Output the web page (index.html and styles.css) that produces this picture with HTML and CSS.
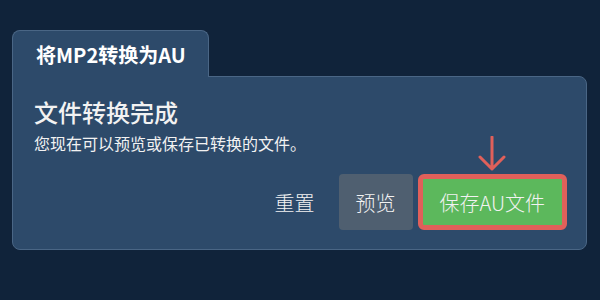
FILE: index.html
```html
<!DOCTYPE html>
<html lang="zh-CN">
<head>
    <meta charset="UTF-8">
    <meta name="viewport" content="width=device-width, initial-scale=1.0">
    <title>将MP2转换为AU</title>
    <link rel="stylesheet" href="styles.css">
</head>
<body>
    <div class="converter">
        <div class="tab">将MP2转换为AU</div>

        <div class="panel">
            <h2 class="title">文件转换完成</h2>
            <p class="subtitle">您现在可以预览或保存已转换的文件。</p>

            <div class="actions">
                <button class="btn btn-reset">重置</button>
                <button class="btn btn-preview">预览</button>
                <div class="save-wrap">
                    <svg class="arrow" width="30" height="36" viewBox="0 0 30 36">
                        <path d="M15 1 V33 M3 21 L15 33 L27 21" fill="none" stroke="#e0605a" stroke-width="3" stroke-linecap="round" stroke-linejoin="round"/>
                    </svg>
                    <button class="btn btn-save">保存AU文件</button>
                </div>
            </div>
        </div>
    </div>
</body>
</html>
```

FILE: styles.css
```css
* {
    box-sizing: border-box;
    margin: 0;
    padding: 0;
}

body {
    font-family: "Noto Sans CJK SC", "Noto Sans", sans-serif;
    background-color: #10233a;
    color: #f2f2f2;
    padding: 30px 13px 0 12px;
}

.converter {
    display: flex;
    flex-direction: column;
    align-items: flex-start;
}

.tab {
    position: relative;
    z-index: 1;
    height: 47px;
    margin-bottom: -1px;
    padding: 0 22px 0 23px;
    display: flex;
    align-items: center;
    font-size: 20px;
    font-weight: bold;
    color: #ffffff;
    background-color: #2d4a6a;
    border: 1px solid #4a6685;
    border-bottom: none;
    border-radius: 8px 8px 0 0;
}

.panel {
    width: 100%;
    padding: 18px 19px 19px 21px;
    background-color: #2d4a6a;
    border: 1px solid #4a6685;
    border-radius: 0 8px 8px 8px;
}

.title {
    font-size: 24px;
    font-weight: 500;
    line-height: 34px;
}

.subtitle {
    font-size: 16px;
    line-height: 22px;
    margin-top: 3px;
}

.actions {
    display: flex;
    justify-content: flex-end;
    align-items: center;
    gap: 5px;
    margin-top: 20px;
}

.btn {
    font-family: inherit;
    font-size: 20px;
    font-weight: 300;
    color: #f2f2f2;
    border: none;
    height: 56px;
    cursor: pointer;
}

.btn-reset {
    background: none;
    padding: 0 12px;
    margin-right: 7px;
}

.btn-preview {
    background-color: #4f5f70;
    border-radius: 4px;
    padding: 0 17px;
}

.save-wrap {
    position: relative;
}

.arrow {
    position: absolute;
    left: 50%;
    top: -38px;
    margin-left: -15px;
}

.btn-save {
    background-color: #5cb85c;
    border: 5px solid #e0605a;
    border-radius: 6px;
    padding: 0 17px;
}
```
